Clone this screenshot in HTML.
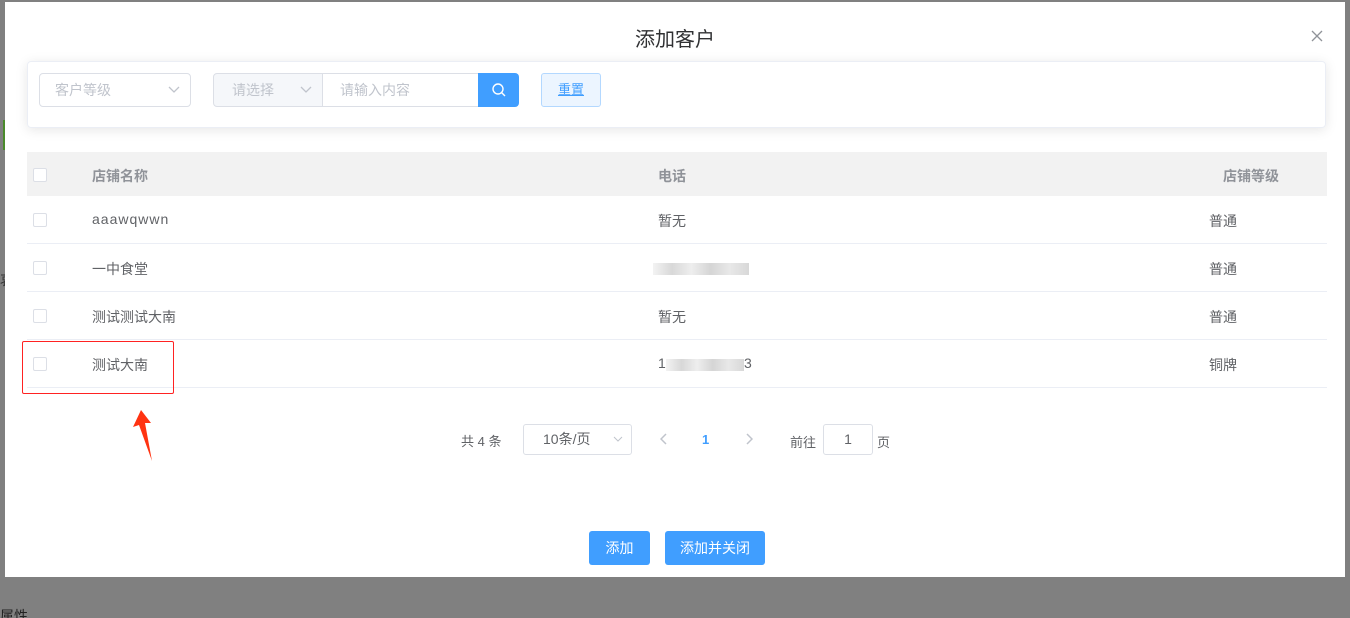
<!DOCTYPE html>
<html><head><meta charset="utf-8"><style>
*{box-sizing:border-box;margin:0;padding:0}
html,body{width:1350px;height:618px;overflow:hidden}
body{background:#808080;font-family:"Liberation Sans","Noto Sans CJK SC",sans-serif;position:relative;font-size:14px;color:#606266}
.dlg{position:absolute;left:5px;top:2px;width:1340px;height:575px;background:#fff}
.a{position:absolute}
.title{left:0;width:1340px;top:21px;text-align:center;font-size:20px;color:#303133}
.card{left:22px;top:59px;width:1299px;height:67px;border:1px solid #ebeef5;border-radius:4px;box-shadow:0 2px 12px rgba(0,0,0,.1)}
.inp{border:1px solid #dcdfe6;border-radius:4px;height:34px;color:#c0c4cc;font-size:14px;line-height:32px;padding-left:15px}
.cb{width:14px;height:14px;border:1px solid #dcdfe6;border-radius:2px;background:#fff}
.row{left:22px;width:1300px;height:48px;border-bottom:1px solid #ebeef5}
.row span{position:absolute;top:15px}
.blur{position:absolute;top:19px;height:12px;background:linear-gradient(90deg,#f3f3f3,#d8d8d8,#eee,#d5d5d5,#e8e8e8,#d8d8d8)}
.btn{background:#409eff;color:#fff;border-radius:3px;height:34px;line-height:34px;text-align:center;font-size:14px}
</style></head><body>
<div class="a" style="left:0;top:270px;font-size:14px;color:#333">哀</div>
<div class="a" style="left:3px;top:120px;width:2px;height:30px;background:#4a8a2a"></div>
<div class="a" style="left:0;top:606px;font-size:14px;color:#222">属性</div>
<div class="dlg">
<div class="a title">添加客户</div>
<svg class="a" style="right:22px;top:28px" width="12" height="12"><path d="M1 1l10 10M11 1L1 11" stroke="#909399" stroke-width="1.3"/></svg>
<div class="a card">
 <div class="a inp" style="left:11px;top:11px;width:152px">客户等级<svg class="a" style="right:10px;top:12px" width="12" height="8"><path d="M1 1l5 5 5-5" fill="none" stroke="#c0c4cc" stroke-width="1.3"/></svg></div>
 <div class="a inp" style="left:185px;top:11px;width:110px;background:#f5f7fa;border-radius:4px 0 0 4px;padding-left:18px">请选择<svg class="a" style="right:10px;top:12px" width="12" height="8"><path d="M1 1l5 5 5-5" fill="none" stroke="#c0c4cc" stroke-width="1.3"/></svg></div>
 <div class="a inp" style="left:295px;top:11px;width:156px;border-left:none;border-radius:0;padding-left:17px">请输入内容</div>
 <div class="a btn" style="left:450px;top:11px;width:41px;border-radius:0 4px 4px 0"><svg width="16" height="16" style="margin-top:9px"><circle cx="7" cy="7" r="5" fill="none" stroke="#fff" stroke-width="1.4"/><path d="M10.5 10.5l3.5 3.5" stroke="#fff" stroke-width="1.4"/></svg></div>
 <div class="a" style="left:513px;top:11px;width:60px;height:34px;border:1px solid #b3d8ff;background:#ecf5ff;color:#409eff;border-radius:3px;text-align:center;line-height:32px;font-size:13px;text-decoration:underline">重置</div>
</div>
<div class="a" style="left:22px;top:150px;width:1300px;height:44px;background:#f2f2f2;color:#909399;font-weight:bold">
 <div class="a cb" style="left:6px;top:16px"></div>
 <span class="a" style="left:65px;top:14px">店铺名称</span><span class="a" style="left:631px;top:14px">电话</span><span class="a" style="left:1196px;top:14px">店铺等级</span>
</div>
<div class="a row" style="top:194px"><div class="a cb" style="left:6px;top:17px"></div><span style="left:65px;letter-spacing:1px">aaawqwwn</span><span style="left:631px">暂无</span><span style="left:1182px">普通</span></div>
<div class="a row" style="top:242px"><div class="a cb" style="left:6px;top:17px"></div><span style="left:65px">一中食堂</span><div class="blur" style="left:626px;width:96px"></div><span style="left:1182px">普通</span></div>
<div class="a row" style="top:290px"><div class="a cb" style="left:6px;top:17px"></div><span style="left:65px">测试测试大南</span><span style="left:631px">暂无</span><span style="left:1182px">普通</span></div>
<div class="a row" style="top:338px"><div class="a cb" style="left:6px;top:17px"></div><span style="left:65px">测试大南</span><span style="left:631px">1</span><div class="blur" style="left:639px;width:78px"></div><span style="left:717px">3</span><span style="left:1182px">铜牌</span></div>
<div class="a" style="left:17px;top:339px;width:152px;height:53px;border:1px solid #f22;border-radius:2px"></div>
<svg class="a" style="left:128px;top:408px" width="30" height="52"><path d="M8 0L0 17l6-2 13 36L12 13l6 0z" fill="#f31"/></svg>
<span class="a" style="left:456px;top:429px;font-size:13px">共 4 条</span>
<div class="a" style="left:518px;top:422px;width:109px;height:31px;border:1px solid #dcdfe6;border-radius:3px;line-height:29px;padding-left:19px">10条/页<svg class="a" style="right:8px;top:11px" width="10" height="7"><path d="M1 1l4 4 4-4" fill="none" stroke="#c0c4cc"/></svg></div>
<svg class="a" style="left:655px;top:431px" width="8" height="12"><path d="M6 1L1 6l5 5" fill="none" stroke="#c0c4cc" stroke-width="1.5"/></svg>
<span class="a" style="left:697px;top:430px;color:#409eff;font-weight:bold;font-size:13px">1</span>
<svg class="a" style="left:740px;top:431px" width="8" height="12"><path d="M2 1l5 5-5 5" fill="none" stroke="#c0c4cc" stroke-width="1.5"/></svg>
<span class="a" style="left:785px;top:430px;font-size:13px">前往</span>
<div class="a" style="left:818px;top:422px;width:50px;height:31px;border:1px solid #dcdfe6;border-radius:3px;text-align:center;line-height:29px">1</div>
<span class="a" style="left:872px;top:430px;font-size:13px">页</span>
<div class="a btn" style="left:584px;top:529px;width:61px">添加</div>
<div class="a btn" style="left:660px;top:529px;width:100px">添加并关闭</div>
</div>
</body></html>
